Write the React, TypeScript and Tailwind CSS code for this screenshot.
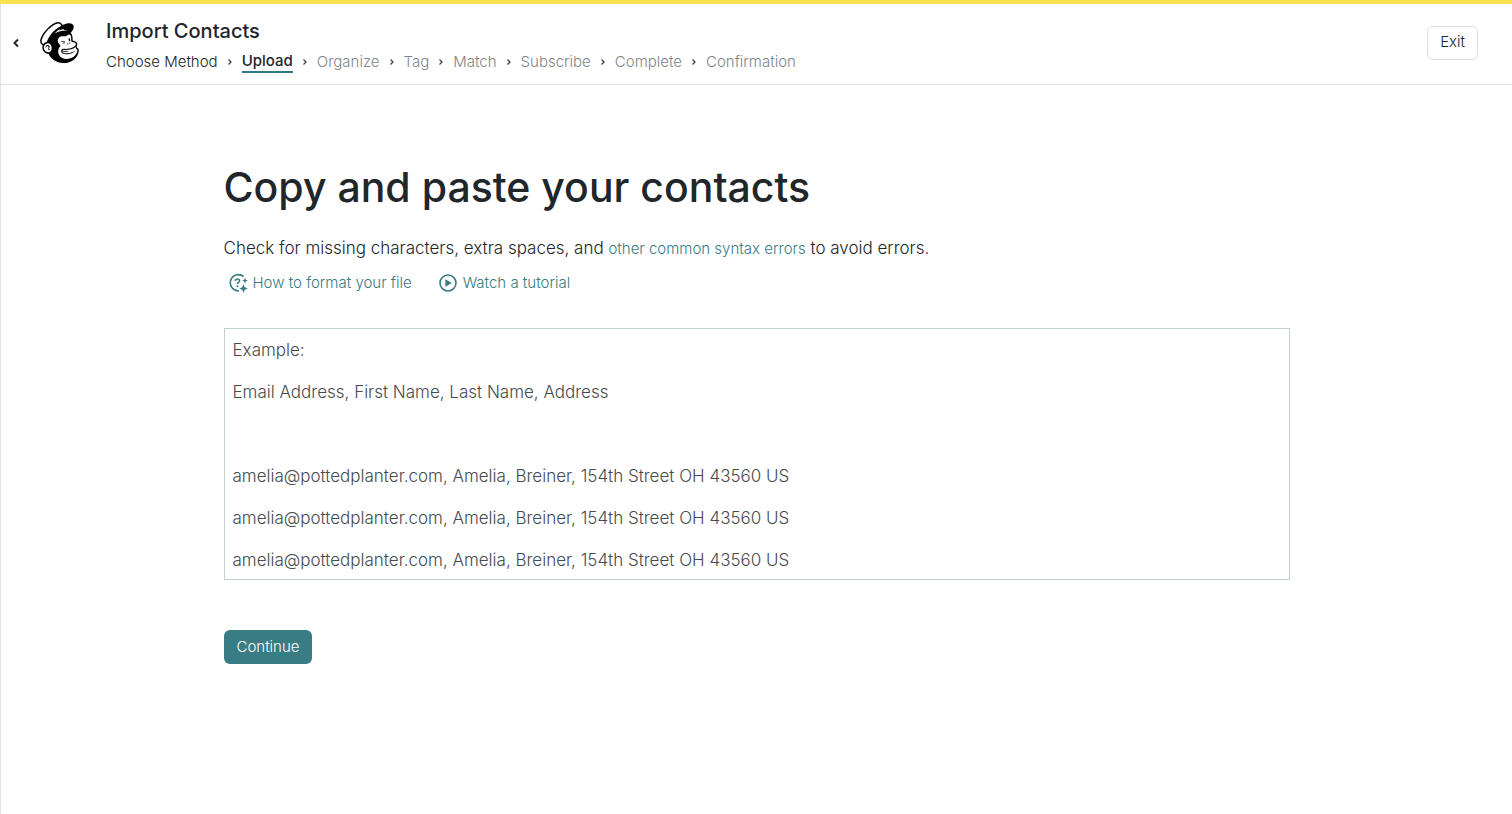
import React, { useState } from 'react';
import { SiMailchimp } from 'react-icons/si';

const STEPS = ['Choose Method', 'Upload', 'Organize', 'Tag', 'Match', 'Subscribe', 'Complete', 'Confirmation'];
const CURRENT_STEP = 1;

const EXAMPLE_ROW = 'amelia@pottedplanter.com, Amelia, Breiner, 154th Street OH 43560 US';
const PLACEHOLDER = [
  'Example:',
  'Email Address, First Name, Last Name, Address',
  '',
  EXAMPLE_ROW,
  EXAMPLE_ROW,
  EXAMPLE_ROW,
].join('\n');

const Chevron: React.FC<{ className?: string }> = ({ className }) => (
  <svg viewBox="0 0 6 8" className={className} fill="none" stroke="currentColor" strokeWidth="1.3" aria-hidden="true">
    <path d="M1.5 1.5 4 4 1.5 6.5" />
  </svg>
);

const FormatHelpIcon = () => (
  <svg viewBox="0 0 20 20" className="w-5 h-5" fill="none" stroke="currentColor" strokeWidth="1.6" aria-hidden="true">
    <path d="M15.6 3.6A8.1 8.1 0 1 0 11 17.9" />
    <path d="M7.3 8.1c0-1.3.9-2.1 2.1-2.1s2.1.8 2.1 1.9c0 1.5-2.1 1.6-2.1 3.1" />
    <circle cx="9.4" cy="13.2" r="1" fill="currentColor" stroke="none" />
    <path d="m17 4.8.8 2 2 .8-2 .8-.8 2-.8-2-2-.8 2-.8z" fill="currentColor" stroke="none" />
    <path d="m15.5 11.2 1.3 3 3 1.3-3 1.3-1.3 3-1.3-3-3-1.3 3-1.3z" fill="currentColor" stroke="none" />
  </svg>
);

const PlayIcon = () => (
  <svg viewBox="0 0 20 20" className="w-5 h-5" fill="none" stroke="currentColor" strokeWidth="1.6" aria-hidden="true">
    <circle cx="10" cy="10" r="8" />
    <path d="M7.4 6.2v7.6l6.4-3.8z" fill="currentColor" stroke="none" />
  </svg>
);

const Header = () => (
  <header className="flex items-center h-[81px] pl-[11px] pr-[34px] pb-[3px] border-b border-[#e2e4e4]">
    <button aria-label="Back" className="flex items-center justify-center w-2 h-6 cursor-pointer">
      <svg viewBox="0 0 8 10" className="w-2 h-[10px]" fill="none" stroke="currentColor" strokeWidth="2" aria-hidden="true">
        <path d="M6 1.5 2.5 5 6 8.5" />
      </svg>
    </button>
    <SiMailchimp className="w-[41px] h-[41px] ml-[19px] text-black" aria-label="Mailchimp" />

    <div className="flex-1 ml-[26px] pt-[6px]">
      <h2 className="text-xl leading-6 font-medium">Import Contacts</h2>
      <ol className="flex items-center mt-2 text-[15px] leading-5 font-light">
        {STEPS.map((step, i) => (
          <li key={step} className={`flex items-center ${i > CURRENT_STEP ? 'text-[#80868a]' : ''}`}>
            {i > 0 && <Chevron className="w-[6px] h-2 mx-[9px] text-[#3c4247]" />}
            {i === CURRENT_STEP ? (
              <span aria-current="step" className="font-medium border-b-2 border-[#2f7a85]">{step}</span>
            ) : (
              <span>{step}</span>
            )}
          </li>
        ))}
      </ol>
    </div>

    <button className="h-[34px] px-3 border border-[#dcdfdf] rounded-md text-[15px] font-light cursor-pointer">Exit</button>
  </header>
);

export default function App() {
  const [contacts, setContacts] = useState('');

  return (
    <div className="min-h-screen flex flex-col bg-white text-[#21262a] font-['Inter','Liberation_Sans',sans-serif]">
      <div className="h-1 bg-[#fbe04f]" />
      <div className="flex-1 border-l border-[#e2e4e4]">
        <Header />

        <main className="max-w-[1066px] mx-auto pt-[76px]">
          <h1 className="text-[41px] leading-[52px] font-medium">Copy and paste your contacts</h1>

          <p className="mt-[23px] text-[17px] leading-6 font-light">
            Check for missing characters, extra spaces, and{' '}
            <a href="#syntax-errors" className="text-[15px] text-[#367c82]">other common syntax errors</a> to avoid errors.
          </p>

          <div className="flex gap-[26px] mt-3 ml-1 text-[15px] leading-5 font-light text-[#367c82]">
            <a href="#format" className="flex items-center gap-[5px]">
              <FormatHelpIcon /> How to format your file
            </a>
            <a href="#tutorial" className="flex items-center gap-[5px]">
              <PlayIcon /> Watch a tutorial
            </a>
          </div>

          <textarea
            aria-label="Contacts"
            value={contacts}
            onChange={(e) => setContacts(e.target.value)}
            placeholder={PLACEHOLDER}
            className="block w-full h-[252px] mt-[35px] px-2 border border-[#c3cfd1] text-[17px] leading-[42px] font-light placeholder:text-[#464b4f] resize-none overflow-hidden"
          />

          <button className="h-[34px] mt-[50px] px-[13px] rounded-md bg-[#397c84] text-white text-[15px] font-light cursor-pointer">
            Continue
          </button>
        </main>
      </div>
    </div>
  );
}
